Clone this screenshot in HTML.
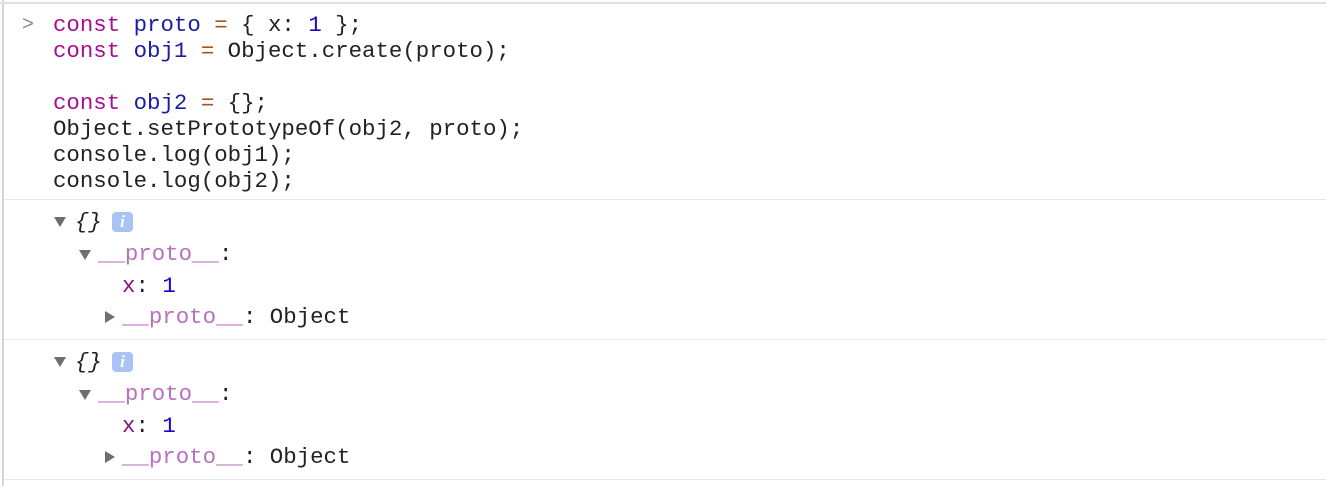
<!DOCTYPE html><html><head><style>
body{margin:0;width:1326px;height:486px;background:#fff;overflow:hidden;font-family:"Liberation Mono",monospace;font-size:22.4px;color:#222;position:relative}
.lb{position:absolute;left:2px;top:0;width:2px;height:486px;background:#d6d6d6}
.tb{position:absolute;left:0;top:2px;width:1326px;height:2px;background:#e0e0e0}
.hr{position:absolute;left:4px;width:1322px;height:1px;background:#e6e6e6}
.l{position:absolute;white-space:pre;line-height:26px}
.k{color:#aa0d91}.v{color:#1c1ca0}.o{color:#a3561c}.n{color:#1a01cc}.p{color:#b871bd}.x{color:#881280}
.tri{position:absolute;width:0;height:0}
.d{border-left:6px solid transparent;border-right:6px solid transparent;border-top:10px solid #6e6e6e}
.r{border-top:6px solid transparent;border-bottom:6px solid transparent;border-left:10px solid #6e6e6e}
.i{position:absolute;width:21px;height:20px;background:#a9c4f4;border-radius:4px;color:#fff;font-family:"Liberation Serif",serif;font-style:italic;font-weight:bold;font-size:17px;text-align:center;line-height:20px}
</style></head><body>
<div class="lb"></div><div class="tb"></div>
<div class="l" style="left:22px;top:13px;color:#888;font-size:20px">&gt;</div>
<div class="l" style="left:53px;top:12px"><span class="k">const</span> <span class="v">proto</span> <span class="o">=</span> { x: <span class="n">1</span> };
<span class="k">const</span> <span class="v">obj1</span> <span class="o">=</span> Object.create(proto);

<span class="k">const</span> <span class="v">obj2</span> <span class="o">=</span> {};
Object.setPrototypeOf(obj2, proto);
console.log(obj1);
console.log(obj2);</div>
<div class="hr" style="top:199px"></div>
<div class="hr" style="top:339px"></div>
<div class="hr" style="top:479px"></div>

<div class="tri d" style="left:54px;top:217px"></div>
<div class="l" style="left:75px;top:209px;font-style:italic">{}</div>
<div class="i" style="left:112px;top:212px">i</div>
<div class="tri d" style="left:79px;top:250px"></div>
<div class="l" style="left:98px;top:241px"><span class="p">__proto__</span>:</div>
<div class="l" style="left:122px;top:273px"><span class="x">x</span>: <span class="n">1</span></div>
<div class="tri r" style="left:105px;top:311px"></div>
<div class="l" style="left:122px;top:304px"><span class="p">__proto__</span>: Object</div>

<div class="tri d" style="left:54px;top:357px"></div>
<div class="l" style="left:75px;top:349px;font-style:italic">{}</div>
<div class="i" style="left:112px;top:352px">i</div>
<div class="tri d" style="left:79px;top:390px"></div>
<div class="l" style="left:98px;top:381px"><span class="p">__proto__</span>:</div>
<div class="l" style="left:122px;top:413px"><span class="x">x</span>: <span class="n">1</span></div>
<div class="tri r" style="left:105px;top:451px"></div>
<div class="l" style="left:122px;top:444px"><span class="p">__proto__</span>: Object</div>
</body></html>
